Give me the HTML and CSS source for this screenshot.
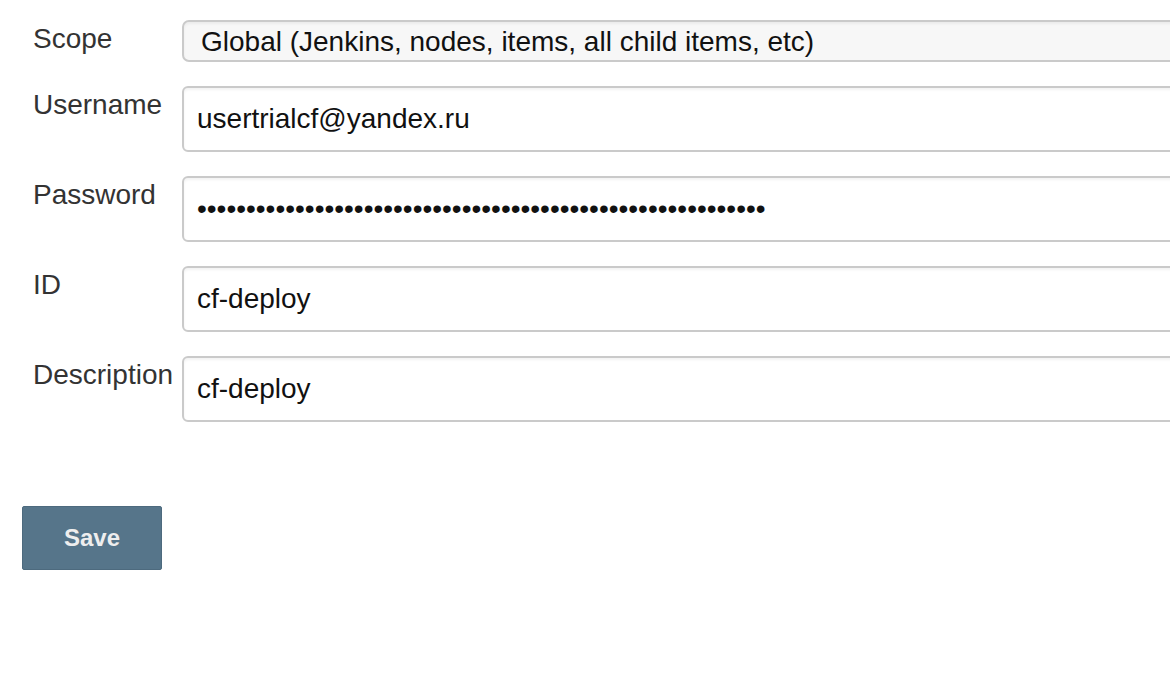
FILE: index.html
```html
<!DOCTYPE html>
<html>
<head>
<meta charset="utf-8">
<link rel="stylesheet" href="styles.css">
</head>
<body>
<div class="page">
  <form class="form">
    <label class="label">Scope</label>
    <div class="field">
      <select class="select">
        <option>Global (Jenkins, nodes, items, all child items, etc)</option>
      </select>
    </div>
    <label class="label">Username</label>
    <div class="field"><input class="input" type="text" value="usertrialcf@yandex.ru"></div>
    <label class="label">Password</label>
    <div class="field"><input class="input" type="password" value="0123456789012345678901234567890123456789012345678901234567"></div>
    <label class="label">ID</label>
    <div class="field"><input class="input" type="text" value="cf-deploy"></div>
    <label class="label">Description</label>
    <div class="field"><input class="input" type="text" value="cf-deploy"></div>
  </form>
  <div class="actions">
    <button class="save" type="button">Save</button>
  </div>
</div>
</body>
</html>
```

FILE: styles.css
```css
html, body {
  margin: 0;
  padding: 0;
  background: #fff;
  overflow: hidden;
}
.page {
  font-family: "Liberation Sans", Arial, Helvetica, sans-serif;
  width: 1170px;
  height: 676px;
  overflow: hidden;
}
.form {
  display: grid;
  grid-template-columns: 149px 1fr;
  row-gap: 24px;
  padding: 20px 0 0 33px;
  margin: 0;
}
.label {
  font-size: 28px;
  line-height: 32px;
  color: #333;
  padding-top: 3px;
  white-space: nowrap;
}
.field {
  min-width: 0;
}
.select {
  -webkit-appearance: none;
  appearance: none;
  display: block;
  width: 1020px;
  height: 42px;
  box-sizing: border-box;
  border: 2px solid #cacaca;
  border-radius: 7px;
  background: #f7f7f7;
  padding: 0 0 0 17px;
  font-family: "Liberation Sans", Arial, sans-serif;
  font-size: 28px;
  color: #111;
  box-shadow: inset 0 2px 3px rgba(0,0,0,0.05);
  outline: none;
}
.input {
  display: block;
  width: 1020px;
  height: 66px;
  box-sizing: border-box;
  border: 2px solid #cacaca;
  border-radius: 6px;
  background: #fff;
  padding: 0 13px;
  font-family: "Liberation Sans", Arial, sans-serif;
  font-size: 28px;
  color: #111;
  box-shadow: inset 0 2px 3px rgba(0,0,0,0.05);
  outline: none;
}
.actions {
  padding: 84px 0 0 22px;
}
.save {
  width: 140px;
  height: 64px;
  box-sizing: border-box;
  background: #56758a;
  border: 1px solid #4d6a7e;
  border-radius: 2px;
  color: #eee;
  font-family: "Liberation Sans", Arial, sans-serif;
  font-weight: bold;
  font-size: 24px;
  padding: 0;
  cursor: pointer;
}
```
